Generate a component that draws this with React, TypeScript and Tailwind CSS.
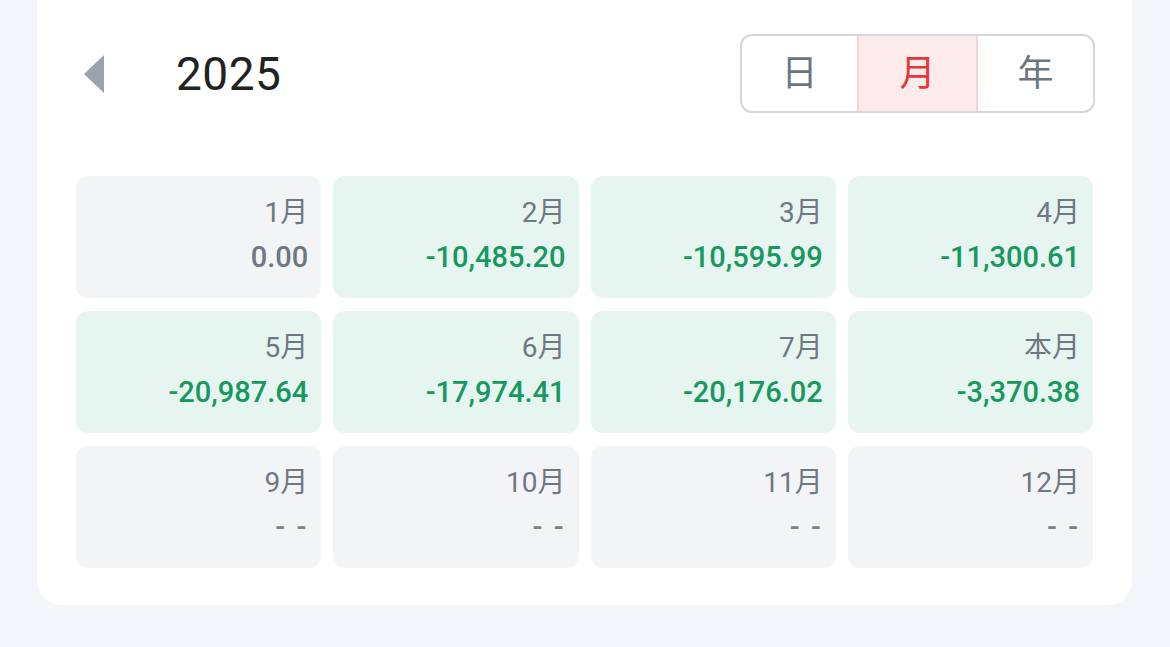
import React from "react";

const cells: { label: string; value: string; kind: "gray" | "green" | "empty" }[] = [
  { label: "1月", value: "0.00", kind: "gray" },
  { label: "2月", value: "-10,485.20", kind: "green" },
  { label: "3月", value: "-10,595.99", kind: "green" },
  { label: "4月", value: "-11,300.61", kind: "green" },
  { label: "5月", value: "-20,987.64", kind: "green" },
  { label: "6月", value: "-17,974.41", kind: "green" },
  { label: "7月", value: "-20,176.02", kind: "green" },
  { label: "本月", value: "-3,370.38", kind: "green" },
  { label: "9月", value: "- -", kind: "empty" },
  { label: "10月", value: "- -", kind: "empty" },
  { label: "11月", value: "- -", kind: "empty" },
  { label: "12月", value: "- -", kind: "empty" },
];

const font = { fontFamily: "Roboto, 'Noto Sans CJK SC', sans-serif" };

export default function App() {
  return (
    <div className="w-[1170px] h-[647px] bg-[#f4f5f9] overflow-hidden" style={font}>
      <div className="ml-[37px] w-[1095px] bg-white rounded-b-[24px] pt-[34px] pb-[37px] px-[39px]">
        <div className="flex items-center h-[79px] -mr-[2px]">
          <svg width="20" height="38" viewBox="0 0 20 38" className="ml-[8px]">
            <polygon points="20,0 20,38 0,19" fill="#9aa3ad" />
          </svg>
          <div className="ml-[72px] text-[46px] leading-none text-[#222222] tracking-[0.5px]">2025</div>
          <div className="ml-auto flex h-[79px] w-[355px] rounded-[12px] border-[2.5px] border-[#d3d6dc] overflow-hidden">
            <div className="flex-1 flex items-center justify-center text-[36px] text-[#6b7580]">日</div>
            <div className="w-[121px] flex items-center justify-center text-[36px] text-[#e5363a] bg-[#fdeaea] border-x-2 border-[#f9d2d2]">月</div>
            <div className="flex-1 flex items-center justify-center text-[36px] text-[#6b7580]">年</div>
          </div>
        </div>
        <div className="mt-[63px] grid grid-cols-4 gap-x-[12px] gap-y-[13px]">
          {cells.map((c) => (
            <div
              key={c.label}
              className={
                "h-[122px] rounded-[12px] pr-[13px] pt-[20px] flex flex-col items-end gap-[12px] " +
                (c.kind === "green" ? "bg-[#e7f5f0]" : "bg-[#f3f4f6]")
              }
            >
              <div className="text-[28px] leading-[33px] text-[#6e7782]">{c.label}</div>
              <div
                className={
                  "text-[29px] leading-[33px] font-medium " +
                  (c.kind === "green" ? "text-[#16985f]" : c.kind === "gray" ? "text-[#6e7782]" : "text-[#7a828c] tracking-[2px]")
                }
              >
                {c.value}
              </div>
            </div>
          ))}
        </div>
      </div>
    </div>
  );
}
